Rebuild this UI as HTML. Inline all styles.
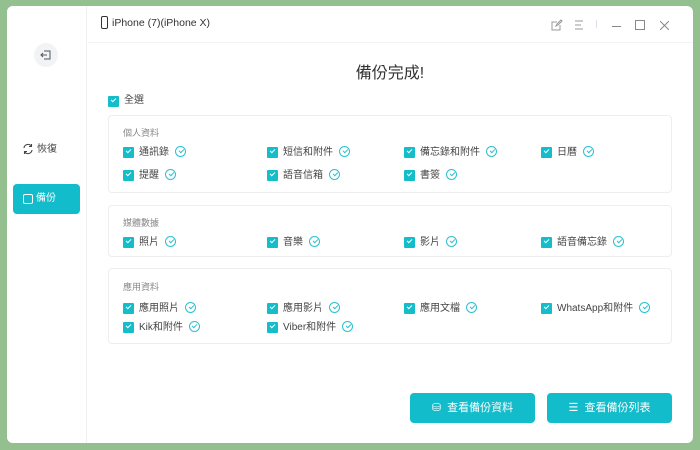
<!DOCTYPE html>
<html><head><meta charset="utf-8"><style>
*{margin:0;padding:0;box-sizing:border-box}
body{width:700px;height:450px;background:#94bf8f;font-family:"Liberation Sans","Noto Sans CJK TC",sans-serif;position:relative;overflow:hidden;color:#333}
.win{position:absolute;left:7px;top:6px;width:686px;height:437px;background:#fff;border-radius:6px;overflow:hidden}
.side{position:absolute;left:0;top:0;width:80px;height:437px;background:#fff;border-right:1px solid #eef0f2}
.hdr{position:absolute;left:81px;top:0;right:0;height:37px;border-bottom:1px solid #f2f3f5}
.abs{position:absolute}
.cb{position:absolute;width:11px;height:11px;background:#14bdca;border-radius:1px}
.cb:after{content:"";position:absolute;left:3px;top:2px;width:4px;height:2px;border-left:1.3px solid #fff;border-bottom:1.3px solid #fff;transform:rotate(-45deg)}
.lbl{position:absolute;font-size:10px;color:#444;white-space:nowrap;line-height:12px}
.ok{display:inline-block;width:11px;height:11px;border:1.2px solid #2cc0cf;border-radius:50%;margin-left:6px;vertical-align:-2px;position:relative}
.ok:after{content:"";position:absolute;left:2.5px;top:2px;width:4px;height:2px;border-left:1.2px solid #2cc0cf;border-bottom:1.2px solid #2cc0cf;transform:rotate(-45deg)}
.box{position:absolute;left:101px;width:564px;border:1px solid #eceef0;border-radius:4px}
.st{position:absolute;font-size:9px;color:#888}
.btn{position:absolute;top:387px;width:125px;height:30px;background:#12bcca;border-radius:4px;color:#fff;font-size:11px;text-align:center;line-height:30px}
</style></head><body>
<div class="win">
<div class="side">
 <div class="abs" style="left:27px;top:37px;width:24px;height:24px;border-radius:50%;background:#f1f3f6"></div>
 <svg class="abs" style="left:33px;top:43px" width="12" height="12" viewBox="0 0 12 12" fill="none" stroke="#555" stroke-width="1"><path d="M4 2h6v8H4M1 6h6M3 4L1 6l2 2"/></svg>
 <svg class="abs" style="left:15px;top:137px" width="12" height="12" viewBox="0 0 12 12" fill="none" stroke="#444" stroke-width="1.1"><path d="M2 5a4 4 0 0 1 7.5-1.5M10 7a4 4 0 0 1-7.5 1.5M9.5 1v2.5H7M2.5 11V8.5H5"/></svg>
 <div class="lbl" style="left:30px;top:138px;font-size:10px">恢復</div>
 <div class="abs" style="left:6px;top:178px;width:67px;height:30px;background:#12bcca;border-radius:4px"></div>
 <div class="abs" style="left:16px;top:188px;width:10px;height:10px;border:1.3px solid #fff;border-radius:2px"></div>
 <div class="lbl" style="left:29px;top:187px;color:#fff">備份</div>
</div>
<div class="hdr">
 <div class="abs" style="left:13px;top:10px;width:7px;height:13px;border:1.2px solid #333;border-radius:2px"></div>
 <div class="lbl" style="left:24px;top:11px;font-size:10.5px;color:#333">iPhone (7)(iPhone X)</div>
 <svg class="abs" style="left:463px;top:13px" width="12" height="12" viewBox="0 0 12 12" fill="none" stroke="#999" stroke-width="1"><path d="M9 6v5H1V3h5M5 7l1-2 4-4 1 1-4 4z"/></svg>
 <svg class="abs" style="left:485px;top:13px" width="12" height="12" viewBox="0 0 12 12" fill="none" stroke="#999" stroke-width="1"><path d="M2 2h8M2 6h6M2 10h8"/></svg>
 <div class="abs" style="left:508px;top:14px;width:1px;height:8px;background:#dde"></div>
 <div class="abs" style="left:524px;top:20px;width:9px;height:1px;background:#888"></div>
 <div class="abs" style="left:547px;top:14px;width:10px;height:10px;border:1px solid #888"></div>
 <svg class="abs" style="left:572px;top:15px" width="9" height="9" viewBox="0 0 9 9" stroke="#888" stroke-width="1"><path d="M0 0l9 9M9 0L0 9"/></svg>
</div>
<div class="abs" style="left:0;right:0;top:53px;text-align:center;padding-left:80px;font-size:16px;color:#333">備份完成!</div>
<div class="cb" style="left:101px;top:90px"></div><div class="lbl" style="left:117px;top:89px">全選</div>

<div class="box" style="top:109px;height:78px"></div>
<div class="st" style="left:116px;top:120px">個人資料</div>
<div class="cb" style="left:116px;top:141px"></div><div class="lbl" style="left:132px;top:140px">通訊錄<span class="ok"></span></div>
<div class="cb" style="left:260px;top:141px"></div><div class="lbl" style="left:276px;top:140px">短信和附件<span class="ok"></span></div>
<div class="cb" style="left:397px;top:141px"></div><div class="lbl" style="left:413px;top:140px">備忘錄和附件<span class="ok"></span></div>
<div class="cb" style="left:534px;top:141px"></div><div class="lbl" style="left:550px;top:140px">日曆<span class="ok"></span></div>
<div class="cb" style="left:116px;top:164px"></div><div class="lbl" style="left:132px;top:163px">提醒<span class="ok"></span></div>
<div class="cb" style="left:260px;top:164px"></div><div class="lbl" style="left:276px;top:163px">語音信箱<span class="ok"></span></div>
<div class="cb" style="left:397px;top:164px"></div><div class="lbl" style="left:413px;top:163px">書簽<span class="ok"></span></div>

<div class="box" style="top:199px;height:52px"></div>
<div class="st" style="left:116px;top:210px">媒體數據</div>
<div class="cb" style="left:116px;top:231px"></div><div class="lbl" style="left:132px;top:230px">照片<span class="ok"></span></div>
<div class="cb" style="left:260px;top:231px"></div><div class="lbl" style="left:276px;top:230px">音樂<span class="ok"></span></div>
<div class="cb" style="left:397px;top:231px"></div><div class="lbl" style="left:413px;top:230px">影片<span class="ok"></span></div>
<div class="cb" style="left:534px;top:231px"></div><div class="lbl" style="left:550px;top:230px">語音備忘錄<span class="ok"></span></div>

<div class="box" style="top:262px;height:76px"></div>
<div class="st" style="left:116px;top:274px">應用資料</div>
<div class="cb" style="left:116px;top:297px"></div><div class="lbl" style="left:132px;top:296px">應用照片<span class="ok"></span></div>
<div class="cb" style="left:260px;top:297px"></div><div class="lbl" style="left:276px;top:296px">應用影片<span class="ok"></span></div>
<div class="cb" style="left:397px;top:297px"></div><div class="lbl" style="left:413px;top:296px">應用文檔<span class="ok"></span></div>
<div class="cb" style="left:534px;top:297px"></div><div class="lbl" style="left:550px;top:296px">WhatsApp和附件<span class="ok"></span></div>
<div class="cb" style="left:116px;top:316px"></div><div class="lbl" style="left:132px;top:315px">Kik和附件<span class="ok"></span></div>
<div class="cb" style="left:260px;top:316px"></div><div class="lbl" style="left:276px;top:315px">Viber和附件<span class="ok"></span></div>

<div class="btn" style="left:403px">&#9921;&nbsp; 查看備份資料</div>
<div class="btn" style="left:540px">&#9776;&nbsp; 查看備份列表</div>
</div>
</body></html>
